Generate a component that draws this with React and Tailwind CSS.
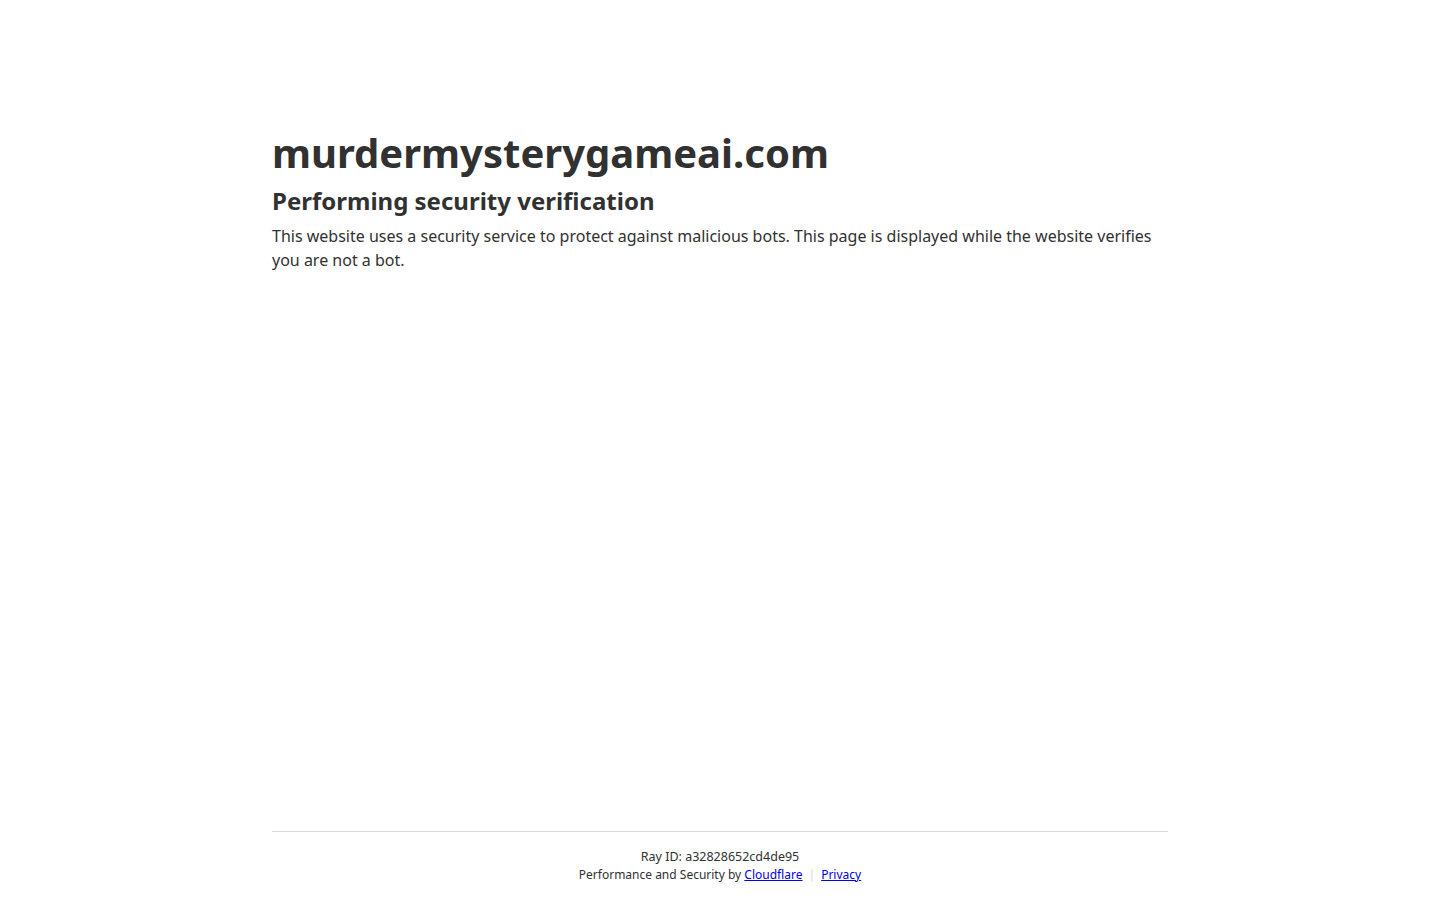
import React from "react";

const App = () => {
  return (
    <div
      className="min-h-screen flex flex-col bg-white text-[#313131]"
      style={{ fontFamily: '"Noto Sans", system-ui, sans-serif' }}
    >
      <div className="w-[896px] mx-auto mt-[123px] flex-1">
        <h1 className="text-[40px] leading-[60px] font-bold">murdermysterygameai.com</h1>
        <h2 className="text-[24px] leading-[36px] font-bold">Performing security verification</h2>
        <p className="text-base leading-6 mt-[5px]">
          This website uses a security service to protect against malicious bots. This page is displayed while the
          website verifies you are not a bot.
        </p>
      </div>

      <footer className="w-[896px] mx-auto border-t border-[#d9d9d9] pt-4 pb-4 text-center text-xs leading-[18px] text-[#313131]">
        <div className="text-[12.5px]">Ray ID: a32828652cd4de95</div>
        <div>
          Performance and Security by{" "}
          <a href="#" className="underline text-[#0000ee]">
            Cloudflare
          </a>
          <span className="text-[#d9d9d9] mx-[6px]">|</span>
          <a href="#" className="underline text-[#0000ee]">
            Privacy
          </a>
        </div>
      </footer>
    </div>
  );
};

export default App;
